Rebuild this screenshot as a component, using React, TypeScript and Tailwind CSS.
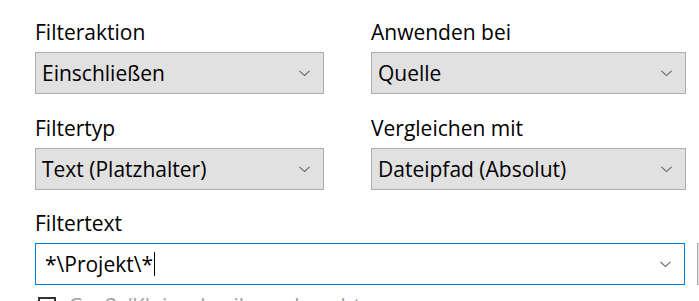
import React, { useState } from 'react';

const Chevron = () => (
    <svg width="11" height="7" viewBox="0 0 11 7" className="shrink-0">
        <path d="M0.5 0.8 L5.5 5.6 L10.5 0.8" fill="none" stroke="#606060" strokeWidth="1.1" />
    </svg>
);

interface ComboProps {
    label: string;
    value: string;
}

const Combo: React.FC<ComboProps> = ({ label, value }) => (
    <div className="flex flex-col">
        <label className="h-[28px] leading-[28px] text-black mb-[6px]">{label}</label>
        <div className="h-[42px] flex items-center justify-between bg-[#e1e1e1] border border-[#adadad] pl-[6px] pr-[13px]">
            <span className="leading-[28px] text-black whitespace-nowrap">{value}</span>
            <Chevron />
        </div>
    </div>
);

export default function App() {
    const [filterText, setFilterText] = useState('*\\Projekt\\*');

    return (
        <div className="w-[699px] h-[301px] overflow-hidden bg-white text-[21px] font-['Open_Sans',sans-serif]">
            <div className="pl-[35px] pt-[18px]">
                <div className="grid grid-cols-[289px_315px] gap-x-[47px] gap-y-[20px]">
                    <Combo label="Filteraktion" value="Einschließen" />
                    <Combo label="Anwenden bei" value="Quelle" />
                    <Combo label="Filtertyp" value="Text (Platzhalter)" />
                    <Combo label="Vergleichen mit" value="Dateipfad (Absolut)" />
                </div>

                {/* Filtertext */}
                <div className="mt-[19px]">
                    <label className="block h-[28px] leading-[28px] text-black mb-[6px]">Filtertext</label>
                    <div className="flex items-center">
                        <div className="w-[650px] h-[42px] shrink-0 flex items-center justify-between bg-white border border-[#0078d7] pl-[9px] pr-[13px]">
                            <div className="flex items-center">
                                <span className="leading-[28px] text-black whitespace-nowrap">{filterText}</span>
                                <span className="w-px h-[24px] bg-black ml-px" />
                            </div>
                            <Chevron />
                        </div>
                        <button
                            onClick={() => setFilterText('')}
                            className="ml-[12px] w-[60px] h-[42px] shrink-0 bg-[#e1e1e1] border border-[#adadad]"
                        />
                    </div>
                </div>

                <div className="mt-[12px] ml-[3px] flex items-start">
                    <span className="w-[18px] h-[18px] shrink-0 border-2 border-[#333333] bg-white" />
                    <span className="ml-[12px] -mt-[5px] leading-[28px] text-[#a0a0a0] whitespace-nowrap">
                        Groß-/Kleinschreibung beachten
                    </span>
                </div>
            </div>
        </div>
    );
}
